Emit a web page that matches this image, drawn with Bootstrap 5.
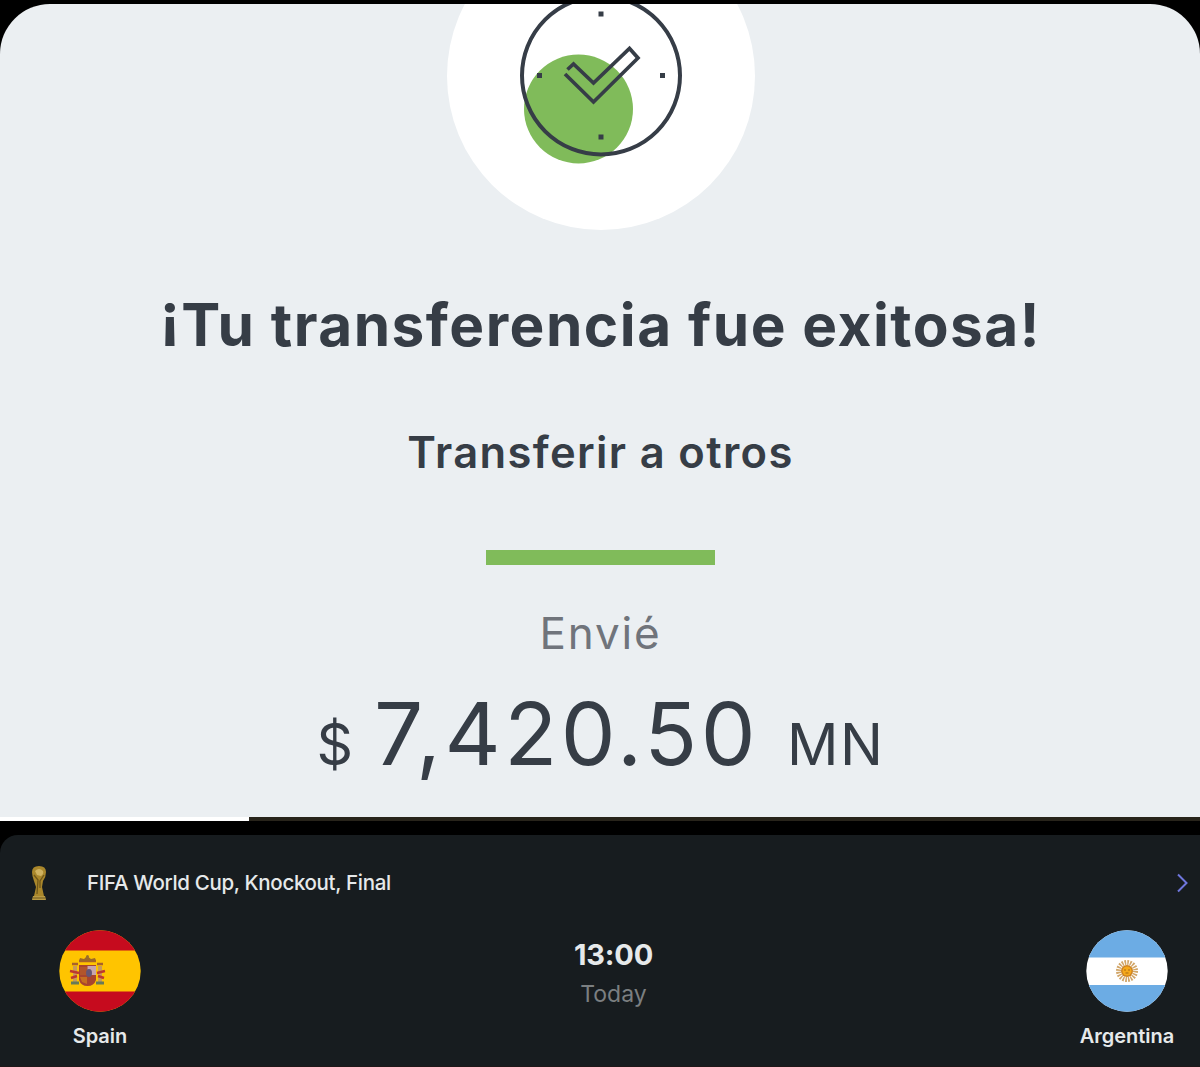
<!DOCTYPE html>
<html lang="es">
<head>
<meta charset="utf-8">
<meta name="viewport" content="width=device-width, initial-scale=1">
<title>Transferencia</title>
<link href="https://cdn.jsdelivr.net/npm/bootstrap@5.3.0/dist/css/bootstrap.min.css" rel="stylesheet">
<style>
body{background:#000;font-family:Inter,Roboto,sans-serif;height:1067px;overflow:hidden}
.receipt{margin-top:4px;height:813px;background:#ebeff2;border-radius:50px 50px 0 0;color:#363d46;padding-left:1px}
.receipt svg{display:block;flex:none}
.headline{font-size:58.5px;font-weight:700;line-height:72px;margin-top:59px;letter-spacing:1.5px}
.headline span{display:inline-block;transform:translateY(-10px)}
.subline{font-size:43.5px;font-weight:600;line-height:56px;margin-top:63px;letter-spacing:1.35px}
.rule{width:229px;height:15px;background:#80bb5a;margin-top:70px}
.sent{font-size:44px;font-weight:400;line-height:56px;color:#70747b;margin-top:40px;letter-spacing:1.8px}
.amount{line-height:100px;margin-top:23px;height:100px;font-weight:400}
.amount .unit{font-size:57px}
.amount .mn{letter-spacing:1.5px}
.amount .total{font-size:87px;margin:0 28px 0 21px;letter-spacing:3.5px}
.track{height:4px;background:#28241b;border-radius:0}
.track .progress-bar{background:#fff;width:249px}
.match{margin-top:14px;height:232px;background:#171c1f;border-bottom:1px solid #1f1718;border-radius:18px 0 0 0;color:#e6e9ea;padding:26px 11px 0 28px}
.league{font-size:20.5px;font-weight:500;line-height:44px;margin-left:36px;letter-spacing:-.33px}
.teams{margin:25px -10px 0 0}
.team{width:144px;font-size:20px;font-weight:600;line-height:28px}
.team svg{display:block;margin:0 auto 10px}
.kick{font-size:29px;font-weight:700;line-height:36px;margin-top:7px;letter-spacing:-.2px}
.day{font-size:23px;line-height:30px;color:#7b7f81;margin-top:6px}
</style>
<script src="https://cdn.jsdelivr.net/npm/bootstrap@5.3.0/dist/js/bootstrap.bundle.min.js"></script>
</head>
<body>
<main class="receipt d-flex flex-column align-items-center overflow-hidden">
  <svg width="309" height="226" viewBox="446 4 309 226" fill="none">
    <circle cx="601" cy="76" r="154" fill="#fff"/>
    <circle cx="578.5" cy="109" r="54.5" fill="#80bb5a"/>
    <circle cx="601" cy="75.500" r="79" stroke="#363d47" stroke-width="4"/>
    <path d="M567.500 69.500L573.500 64L593.500 83L629.500 48.500L638 58L593.500 102L565 74" stroke="#363d47" stroke-width="3.700"/>
    <path d="M598.500 11.500h5v5h-5zM598.500 134.500h5v5h-5zM537 73h5v5h-5zM660 73h5v5h-5z" fill="#363d47"/>
  </svg>
  <h1 class="headline mb-0 text-nowrap"><span>¡</span>Tu transferencia fue exitosa!</h1>
  <h2 class="subline mb-0 text-nowrap">Transferir a otros</h2>
  <div class="rule"></div>
  <div class="sent">Envié</div>
  <div class="amount d-flex align-items-baseline justify-content-center text-nowrap"><span class="unit">$</span><span class="total">7,420.50</span><span class="unit mn">MN</span></div>
</main>
<div class="progress track"><div class="progress-bar"></div></div>
<section class="match">
  <div class="d-flex align-items-center">
    <svg width="23" height="36" viewBox="0 0 23 36"><path d="M4 7Q4 1 11 1Q18 1 18 7Q18 12 15 16L14 22L16 31H6L8 22L6 16Q4 11 4 7Z" fill="#aa872b"/><path d="M7 6Q11 2 15 6Q16 9 13 11L9 10Z" fill="#d0b260"/><path d="M6 10L10 15L9 29M16 10L12 16L12 23" stroke="#705719" stroke-width="1.300" fill="none"/><path d="M5 31H17L18 35H4Z" fill="#b99a43"/><path d="M5 33H17" stroke="#715a20"/></svg>
    <span class="league text-nowrap">FIFA World Cup, Knockout, Final</span>
    <svg class="ms-auto" width="14" height="22" viewBox="0 0 14 22"><path d="M3 2.500L11.500 11L3 19.500" fill="none" stroke="#6f76dc" stroke-width="2"/></svg>
  </div>
  <div class="teams d-flex justify-content-between text-center">
    <div class="team esp"><svg width="82" height="82" viewBox="0 0 82 82"><defs><clipPath id="c"><circle cx="41" cy="41" r="40.700"/></clipPath></defs><g clip-path="url(#c)"><path fill="#ffc400" d="M0 0h82v82H0z"/><path fill="#c60b1e" d="M0 0h82v20.500H0zM0 61.500h82V82H0z"/></g>
      <path d="M14 36h4v17h-4zM39 36h4v17h-4z" fill="#c99b58"/><path d="M12 53h8M37 53h8" stroke="#687a58" stroke-width="3"/><path d="M13 34h6M38 34h6M20 31h17" stroke="#a8622a" stroke-width="2.500"/><path d="M11 41l9 2M12 48l6-2M46 41l-8 2M45 48l-6-2" stroke="#bd3830" stroke-width="2.500"/><path d="M20 35h17v15q-2 6-8.500 6T20 50z" fill="#a8442e"/><path d="M28.500 36H37v9h-8.500z" fill="#c7a5ad"/><path d="M21 37h7v8h-7z" fill="#b2552b"/><path d="M21 47h7v7l-5-2z" fill="#c66e21"/><ellipse cx="30" cy="43" rx="3" ry="4" fill="#665573"/><path d="M20 31l1-3 4 1 3-3 4 3 4-1 1 3z" fill="#9d6926"/><circle cx="28.500" cy="26.500" r="1.500" fill="#99702d"/></svg>Spain</div>
    <div class="mid"><div class="kick">13:00</div><div class="day">Today</div></div>
    <div class="team arg"><svg width="82" height="82" viewBox="0 0 82 82"><g clip-path="url(#c)"><path fill="#fff" d="M0 0h82v82H0z"/><path fill="#6cace4" d="M0 0h82v27.500H0zM0 55h82v27H0z"/></g><circle cx="41" cy="41" r="8.500" fill="none" stroke="#d1a568" stroke-width="5" stroke-dasharray="1.600 1.070"/><circle cx="41" cy="41" r="6" fill="#cc8120"/><circle cx="41" cy="41" r="4.500" fill="#f6a91b"/><path d="M38 40h2M42 40h2M39.500 43h3" stroke="#a76816"/></svg>Argentina</div>
  </div>
</section>
</body>
</html>
